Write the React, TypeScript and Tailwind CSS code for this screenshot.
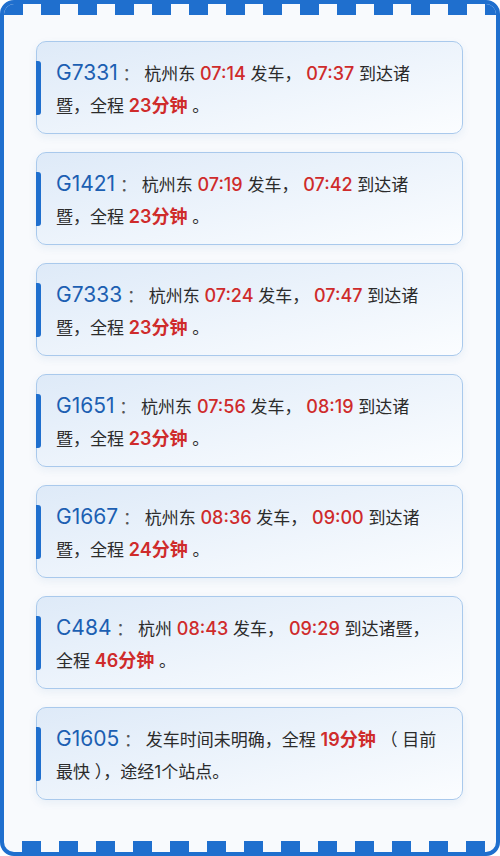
import React from "react";

const R = ({ children }: { children: React.ReactNode }) => (
  <span className="text-[18px] font-medium text-[#cf2b2b]">{children}</span>
);
const D = ({ children }: { children: React.ReactNode }) => (
  <span className="text-[18px] font-semibold text-[#cf2b2b]">{children}</span>
);

type Card = { code: string; l1: React.ReactNode; l2: React.ReactNode };

const cards: Card[] = [
  {
    code: "G7331",
    l1: (<>杭州东 <R>07:14</R> 发车， <R>07:37</R> 到达诸</>),
    l2: (<>暨，全程 <D>23分钟</D> 。</>),
  },
  {
    code: "G1421",
    l1: (<>杭州东 <R>07:19</R> 发车， <R>07:42</R> 到达诸</>),
    l2: (<>暨，全程 <D>23分钟</D> 。</>),
  },
  {
    code: "G7333",
    l1: (<>杭州东 <R>07:24</R> 发车， <R>07:47</R> 到达诸</>),
    l2: (<>暨，全程 <D>23分钟</D> 。</>),
  },
  {
    code: "G1651",
    l1: (<>杭州东 <R>07:56</R> 发车， <R>08:19</R> 到达诸</>),
    l2: (<>暨，全程 <D>23分钟</D> 。</>),
  },
  {
    code: "G1667",
    l1: (<>杭州东 <R>08:36</R> 发车， <R>09:00</R> 到达诸</>),
    l2: (<>暨，全程 <D>24分钟</D> 。</>),
  },
  {
    code: "C484",
    l1: (<>杭州 <R>08:43</R> 发车， <R>09:29</R> 到达诸暨，</>),
    l2: (<>全程 <D>46分钟</D> 。</>),
  },
  {
    code: "G1605",
    l1: (<>发车时间未明确，全程 <D>19分钟</D> （ 目前</>),
    l2: (<>最快 ），途经1个站点。</>),
  },
];

export default function App() {
  return (
    <div className="w-[500px] h-[856px] border-4 border-[#1f6fce] rounded-[14px] bg-[#f8fafd] flex flex-col overflow-hidden font-['Inter','Noto_Sans_CJK_SC',sans-serif]">
      <div className="h-[11px] shrink-0 bg-[repeating-linear-gradient(90deg,#1f6fce_0px_19px,transparent_19px_37px)]" />
      <div className="flex-1 flex flex-col gap-[18px] pl-[32px] pr-[33px] pt-[26px]">
        {cards.map((c) => (
          <div
            key={c.code}
            className="relative h-[93px] rounded-[10px] border border-[#a9c9ec] bg-linear-to-br from-[#deeaf8] to-[#fbfdff] pl-[19px] pr-[10px] pt-[15px] pb-[12px] leading-[32px] text-[17px] text-[#2b2b2b] shadow-[0_3px_8px_rgba(40,100,170,0.08)]"
          >
            <div className="absolute left-[-1px] top-[19px] h-[54px] w-[5px] rounded-r-[3px] bg-[#1f6fce]" />
            <div className="whitespace-nowrap">
              <span className="text-[21px] text-[#1c5fb2]">{c.code}</span>{" "}
              <span className="text-[#555]">：</span> {c.l1}
            </div>
            <div className="whitespace-nowrap">{c.l2}</div>
          </div>
        ))}
      </div>
      <div className="h-[11px] shrink-0 bg-[repeating-linear-gradient(90deg,transparent_0px_18px,#1f6fce_18px_37px)]" />
    </div>
  );
}
